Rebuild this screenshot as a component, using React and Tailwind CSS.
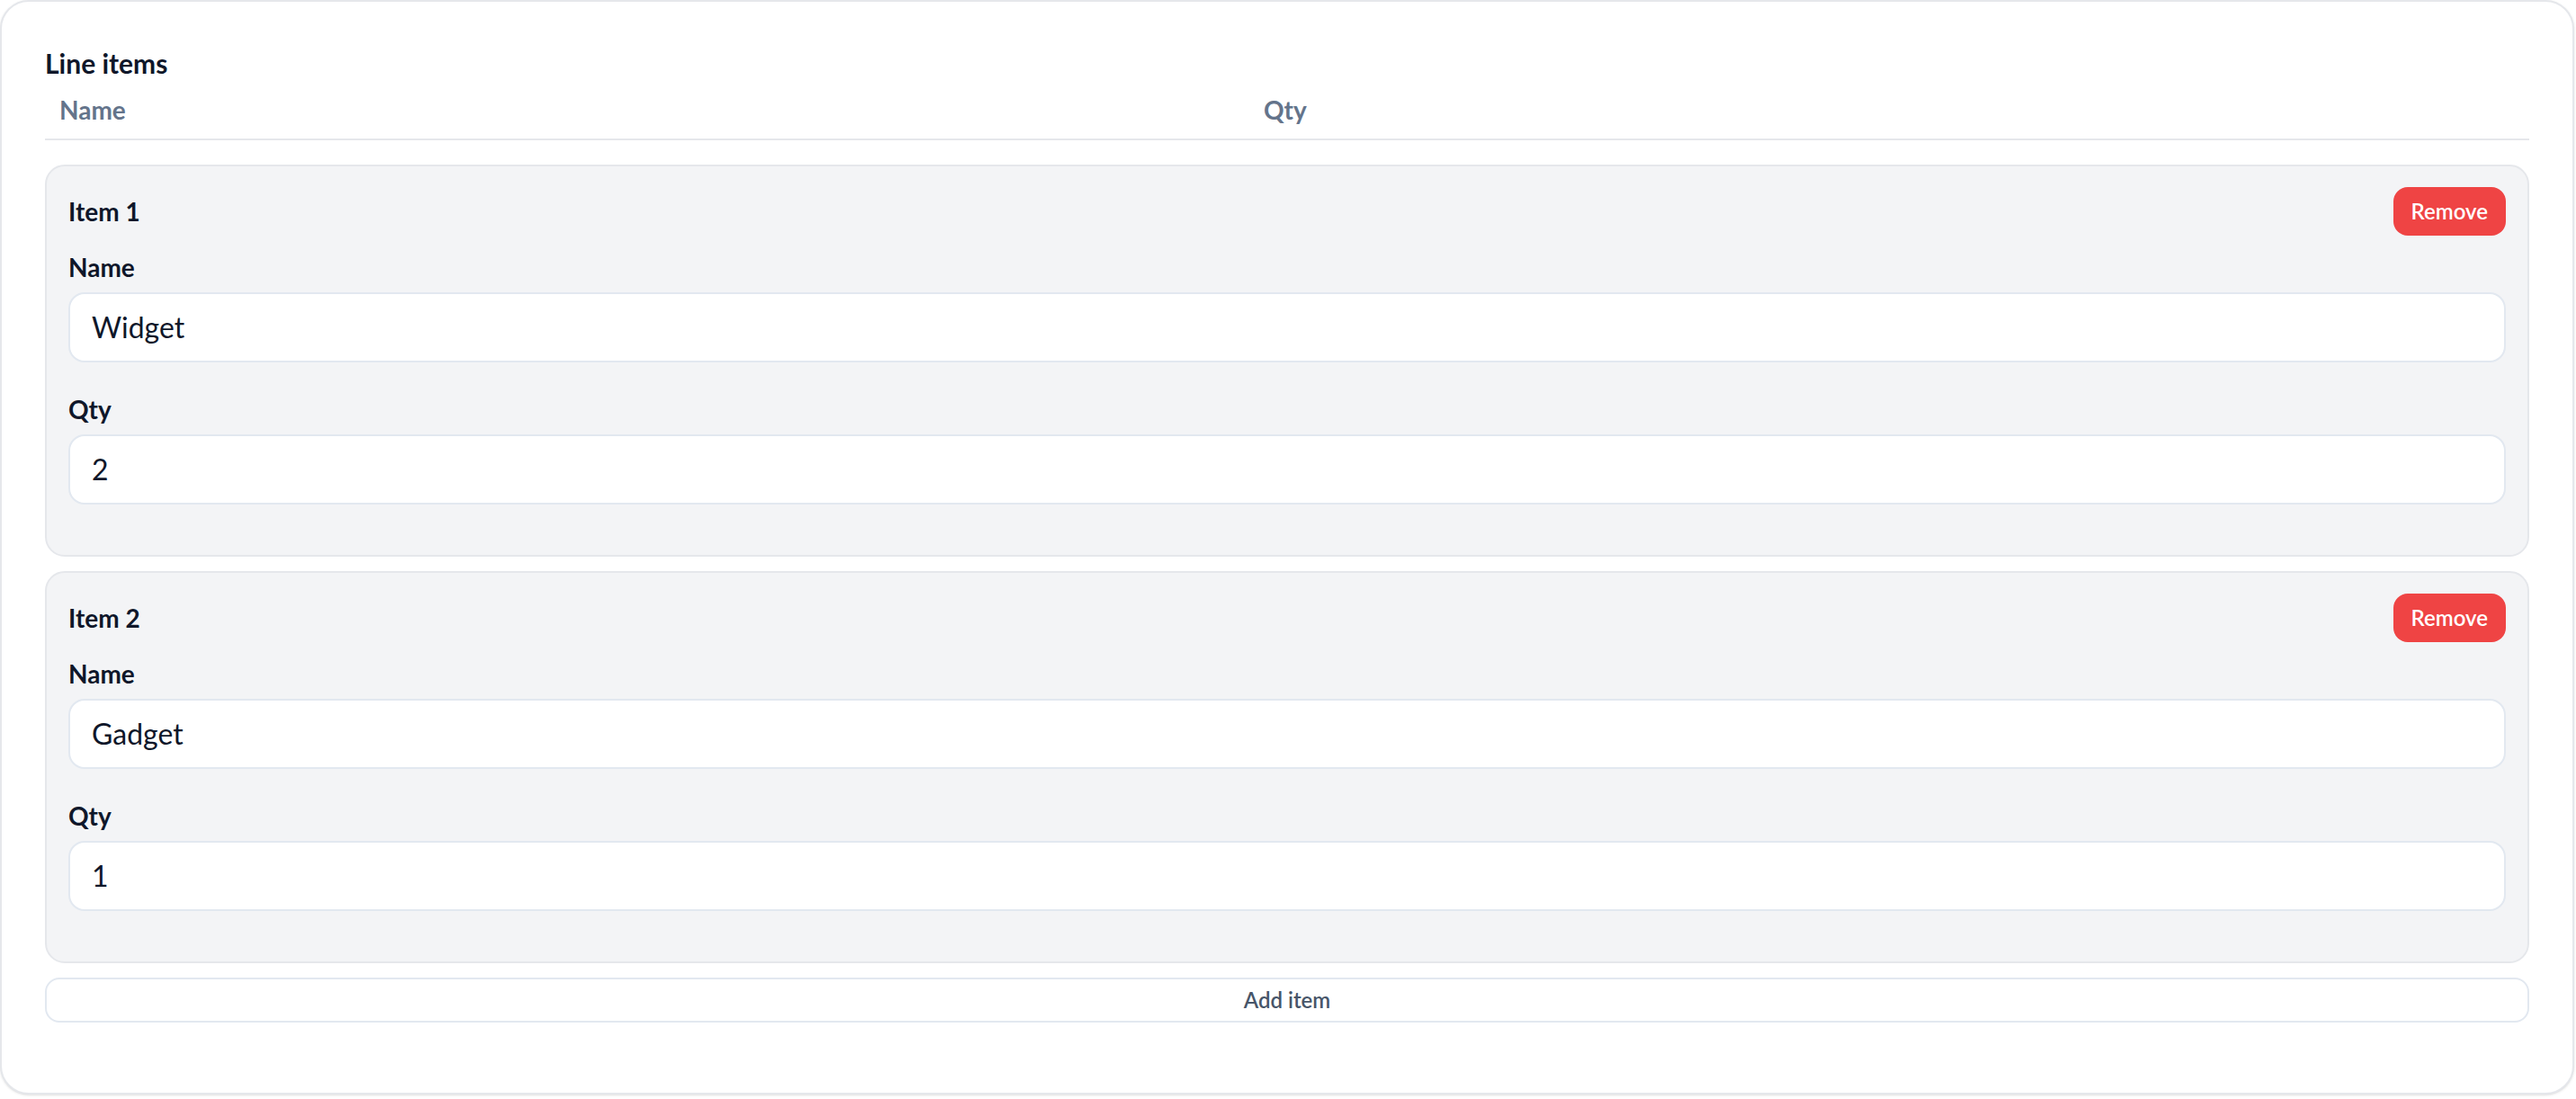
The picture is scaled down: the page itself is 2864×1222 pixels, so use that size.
import React from "react";

function Field({ label, value }) {
  return (
    <div className="mb-[32px]">
      <div className="text-[28px] leading-[40px] font-bold text-[#0f172a] mb-[8px]">{label}</div>
      <div className="h-[78px] flex items-center bg-white border-2 border-[#e2e8f0] rounded-[18px] px-[24px] text-[32px] text-[#0f172a]">
        {value}
      </div>
    </div>
  );
}

function ItemCard({ title, name, qty }) {
  return (
    <div className="border-2 border-[#e5e7eb] bg-[#f3f4f6] rounded-[22px] p-[24px]">
      <div className="h-[52px] flex items-center justify-between mb-[16px]">
        <div className="text-[28px] font-bold text-[#0f172a]">{title}</div>
        <button className="h-[54px] px-[20px] rounded-[16px] bg-[#ef4444] text-white text-[24px] font-semibold">
          Remove
        </button>
      </div>
      <Field label="Name" value={name} />
      <Field label="Qty" value={qty} />
    </div>
  );
}

export default function App() {
  return (
    <div className="w-[2864px] h-[1222px] bg-white font-['Lato',sans-serif]">
      <div className="w-[2862px] h-[1217px] bg-white border-2 border-[#e5e7eb] rounded-[32px] shadow-sm px-[48px] pt-[48px]">
        <div className="text-[30px] leading-[40px] font-bold text-[#0f172a]">Line items</div>
        <div className="mt-[12px] grid grid-cols-[1339px_1fr] border-b-2 border-[#e5e7eb] pb-[12px]">
          <div className="pl-[16px] text-[28px] leading-[40px] font-bold text-[#64748b]">Name</div>
          <div className="pl-[16px] text-[28px] leading-[40px] font-bold text-[#64748b]">Qty</div>
        </div>
        <div className="mt-[27px] flex flex-col gap-[16px]">
          <ItemCard title="Item 1" name="Widget" qty="2" />
          <ItemCard title="Item 2" name="Gadget" qty="1" />
          <button className="h-[50px] w-full border-2 border-[#e2e8f0] rounded-[16px] bg-white text-[24px] font-semibold text-[#475569]">
            Add item
          </button>
        </div>
      </div>
    </div>
  );
}
